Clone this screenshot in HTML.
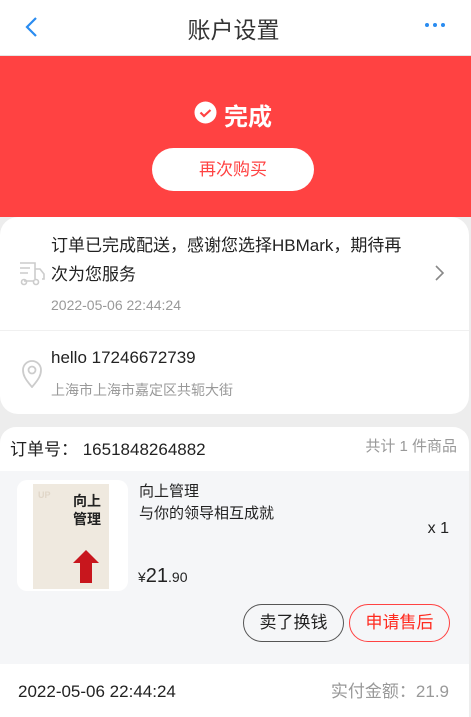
<!DOCTYPE html>
<html><head><meta charset="utf-8"><style>
*{margin:0;padding:0;box-sizing:border-box}
body{width:471px;height:717px;overflow:hidden;background:#ededed;font-family:"Liberation Sans","Noto Sans CJK SC",sans-serif;position:relative}
.a{position:absolute}
</style></head><body>
<div class="a" style="left:0;top:0;width:471px;height:56px;background:#fff;border-bottom:1px solid #e5e5e5"></div>
<svg class="a" style="left:24px;top:15px" width="16" height="24"><path d="M12 3 L3 12 L12 21" fill="none" stroke="#2a8cf0" stroke-width="2.2"/></svg>
<div class="a" style="left:0;width:467px;top:11px;text-align:center;font-size:23px;color:#333">账户设置</div>
<div class="a" style="left:425px;top:23px;width:4px;height:4px;border-radius:2px;background:#2a8cf0;box-shadow:8px 0 #2a8cf0,16px 0 #2a8cf0"></div>
<div class="a" style="left:0;top:56px;width:471px;height:161px;background:#ff4242"></div>
<svg class="a" style="left:194px;top:101px" width="23" height="23"><circle cx="11.5" cy="11.5" r="11" fill="#fff"/><path d="M6.5 11.5 L10 15 L16.5 9" fill="none" stroke="#ff4242" stroke-width="2.2"/></svg>
<div class="a" style="left:224px;top:97px;font-size:24px;font-weight:bold;color:#fff">完成</div>
<div class="a" style="left:152px;top:148px;width:162px;height:43px;border-radius:22px;background:#fff;color:#ff4242;font-size:17px;text-align:center;line-height:43px">再次购买</div>
<div class="a" style="left:0;top:217px;width:469px;height:197px;background:#fff;border-radius:18px"></div>
<svg class="a" style="left:19px;top:261px" width="27" height="25" fill="none" stroke="#ccc" stroke-width="1.6"><path d="M1 2h15v16M1 7h10M1 12h8M16 8h5l4 5v5h-2M5 20h10"/><circle cx="5" cy="21" r="2.5"/><circle cx="17" cy="21" r="2.5"/></svg>
<div class="a" style="left:51px;top:231px;width:362px;font-size:17px;line-height:29px;color:#222">订单已完成配送，感谢您选择HBMark，期待再次为您服务</div>
<div class="a" style="left:51px;top:297px;font-size:14px;color:#999">2022-05-06 22:44:24</div>
<svg class="a" style="left:434px;top:264px" width="12" height="18"><path d="M2 2 L9 9 L2 16" fill="none" stroke="#888" stroke-width="1.6"/></svg>
<div class="a" style="left:0;top:330px;width:469px;height:1px;background:#f0f0f0"></div>
<svg class="a" style="left:21px;top:360px" width="22" height="28" fill="none" stroke="#ccc" stroke-width="1.8"><path d="M11 27 C4 19 2 15 2 10 A9 9 0 0 1 20 10 C20 15 18 19 11 27Z"/><circle cx="11" cy="10" r="3.5"/></svg>
<div class="a" style="left:51px;top:348px;font-size:17px;color:#222">hello 17246672739</div>
<div class="a" style="left:51px;top:380px;font-size:14px;color:#999">上海市上海市嘉定区共轭大街</div>
<div class="a" style="left:0;top:427px;width:469px;height:290px;background:#fff;border-radius:16px 16px 0 0;overflow:hidden">
<div class="a" style="left:0;top:44px;width:469px;height:193px;background:#f5f6f8"></div>
</div>
<div class="a" style="left:10px;top:440px;font-size:17px;line-height:20px;color:#222">订单号：&nbsp;1651848264882</div>
<div class="a" style="right:14px;top:438px;font-size:15px;line-height:18px;color:#999">共计 1 件商品</div>
<div class="a" style="left:17px;top:480px;width:111px;height:111px;background:#fff;border-radius:10px"></div>
<div class="a" style="left:33px;top:484px;width:76px;height:105px;background:#efe9df">
<div class="a" style="left:5px;top:6px;font-size:9px;font-weight:bold;color:#e0d6c8">UP</div>
<div class="a" style="left:40px;top:8px;font-size:14px;font-weight:bold;color:#222;line-height:18px">向上<br>管理</div>
<div class="a" style="left:40px;top:66px;width:0;height:0;border-left:13px solid transparent;border-right:13px solid transparent;border-bottom:13px solid #c8161d"></div>
<div class="a" style="left:47px;top:79px;width:12px;height:20px;background:#c8161d"></div>
</div>
<div class="a" style="left:139px;top:481px;font-size:15px;line-height:22px;color:#222">向上管理<br>与你的领导相互成就</div>
<div class="a" style="right:22px;top:520px;font-size:16px;color:#222">x 1</div>
<div class="a" style="left:138px;top:565px;color:#222;font-size:14px">¥<span style="font-size:20px">21</span>.90</div>
<div class="a" style="left:243px;top:604px;width:101px;height:38px;border:1px solid #555;border-radius:19px;text-align:center;line-height:36px;font-size:17px;color:#222">卖了换钱</div>
<div class="a" style="left:349px;top:604px;width:101px;height:38px;border:1px solid #ff4242;border-radius:19px;text-align:center;line-height:36px;font-size:17px;color:#ff2a1f">申请售后</div>
<div class="a" style="left:18px;top:682px;font-size:17px;line-height:20px;color:#222">2022-05-06 22:44:24</div>
<div class="a" style="right:22px;top:682px;font-size:17px;line-height:20px;color:#999">实付金额：21.9</div>
</body></html>
